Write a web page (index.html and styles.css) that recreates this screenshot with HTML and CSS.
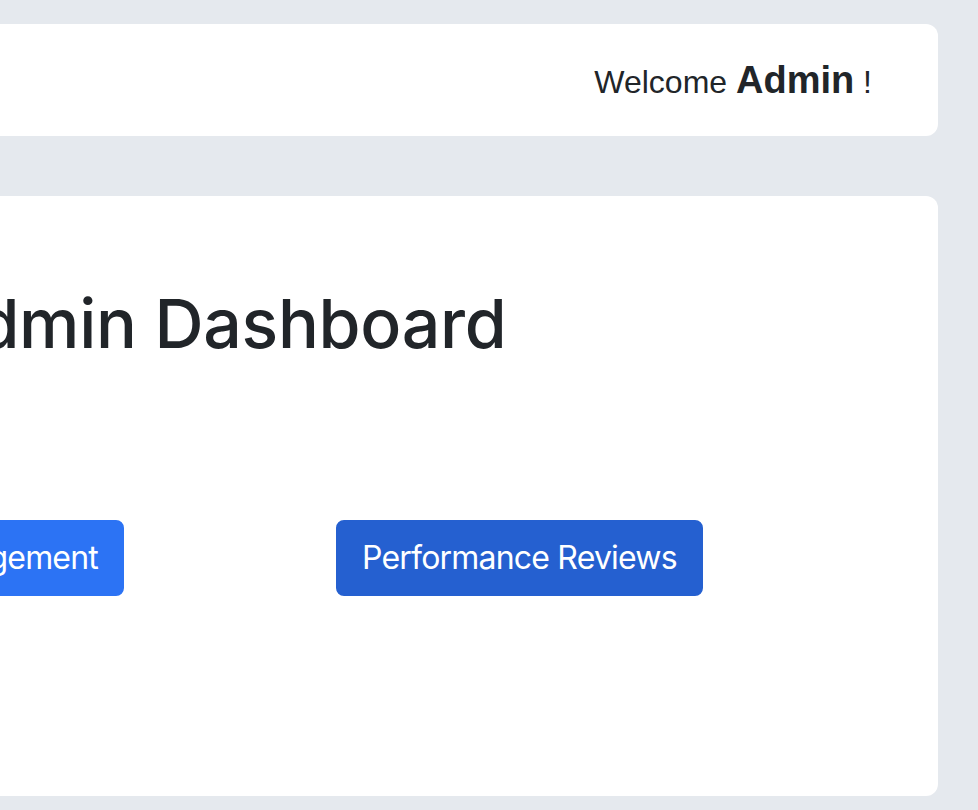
FILE: index.html
```html
<!DOCTYPE html>
<html lang="en">
<head>
<meta charset="utf-8">
<title>Admin Dashboard</title>
<link rel="stylesheet" href="styles.css">
</head>
<body>
<div class="page">
  <header class="card topbar">
    <p class="welcome">Welcome <strong class="user">Admin</strong> !</p>
  </header>
  <main class="card panel">
    <h1 class="title">Admin Dashboard</h1>
    <div class="actions">
      <div class="col col-first">
        <a class="btn btn-primary" href="#">Employee Management</a>
      </div>
      <div class="col">
        <a class="btn btn-active" href="#">Performance Reviews</a>
      </div>
    </div>
  </main>
</div>
</body>
</html>
```

FILE: styles.css
```css
* { box-sizing: border-box; }
html, body { margin: 0; padding: 0; }
body {
  background: #e5e9ee;
  color: #212529;
  font-family: Inter, "Noto Sans", sans-serif;
  overflow: hidden;
}
.page {
  margin: 24px 40px 0 -120px;
  display: flex;
  flex-direction: column;
  gap: 60px;
}
.card {
  background: #ffffff;
  border-radius: 12px;
}
.topbar {
  height: 112px;
  display: flex;
  align-items: center;
  justify-content: flex-end;
  padding: 2px 66px 0 0;
}
.welcome {
  margin: 0;
  font-family: "Liberation Sans", Arial, sans-serif;
  font-size: 32px;
  line-height: 48px;
  white-space: nowrap;
}
.user {
  font-size: 38px;
  font-weight: 700;
}
.panel {
  height: 600px;
  padding: 84px 0 0 50px;
}
.title {
  margin: 0;
  font-size: 68px;
  line-height: 86px;
  font-weight: 500;
  letter-spacing: -0.3px;
  white-space: nowrap;
}
.actions {
  margin-top: 154px;
  display: flex;
  gap: 212px;
}
.col {
  display: flex;
  flex: none;
}
.col-first {
  width: 194px;
  justify-content: flex-end;
}
.btn {
  flex: none;
  display: inline-block;
  white-space: nowrap;
  font-size: 32px;
  line-height: 48px;
  letter-spacing: -0.8px;
  padding: 12px 24px;
  border: 2px solid transparent;
  border-radius: 8px;
  color: #ffffff;
  text-decoration: none;
}
.btn-primary {
  background: #2c73f4;
  border-color: #2c73f4;
}
.btn-active {
  background: #2560d0;
  border-color: #2560d0;
}
```
